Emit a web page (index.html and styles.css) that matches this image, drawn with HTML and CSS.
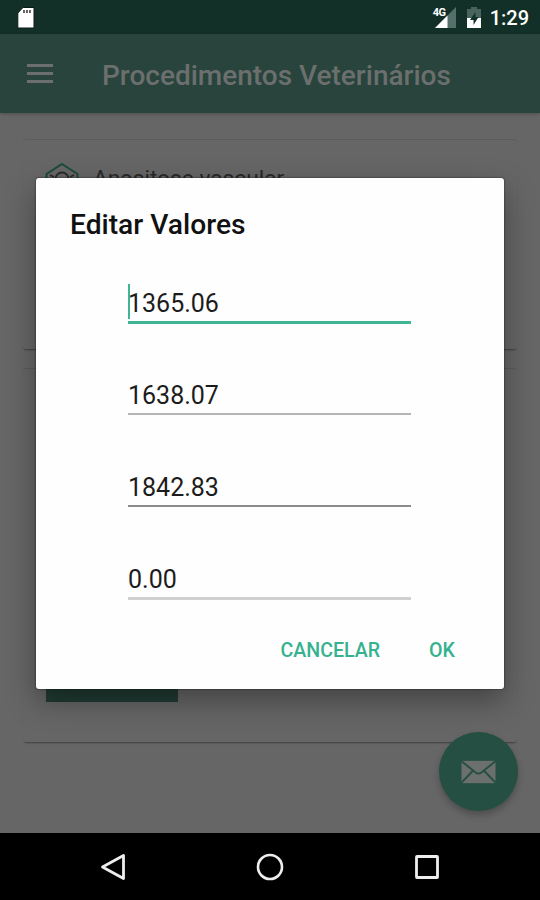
FILE: index.html
```html
<!DOCTYPE html>
<html lang="pt-BR">
<head>
    <meta charset="UTF-8">
    <meta name="viewport" content="width=device-width, initial-scale=1.0">
    <title>Procedimentos Veterinários</title>
    <link rel="stylesheet" href="styles.css">
</head>
<body>
    <div class="screen">
        <div class="status-bar">
            <svg class="sd-icon" width="18" height="22" viewBox="0 0 18 22">
                <path d="M6 0.500h11v20.500H0.800V6z" fill="#fff" stroke="#071a15" stroke-width="1"/>
                <path d="M7 3v3M10 3v3M13 3v3" stroke="#333" stroke-width="1.500"/>
            </svg>
            <div class="status-right">
                <span class="network">4G</span>
                <svg class="signal-icon" width="21" height="21" viewBox="0 0 21 21">
                    <path d="M21 0v21H0z" fill="#55706a"/>
                    <path d="M12.500 8.500V21H0z" fill="#fff"/>
                </svg>
                <svg class="battery-icon" width="14" height="21" viewBox="0 0 14 21">
                    <path d="M4 0h6v2h4v9H0V2h4z" fill="#48645c"/>
                    <path d="M0 11h14v10H0z" fill="#fff"/>
                    <path d="M8.500 5L3 13h3.500v5L11.500 10H8.500z" fill="#123028"/>
                </svg>
                <span class="clock">1:29</span>
            </div>
        </div>

        <header class="app-bar">
            <svg class="menu-icon" width="26" height="20" viewBox="0 0 26 20">
                <path d="M0 1.500h26M0 9.500h26M0 17.500h26" stroke="#6b6f6d" stroke-width="2.800"/>
            </svg>
            <h1>Procedimentos Veterinários</h1>
        </header>

        <main class="content">
            <div class="card card-first">
                <svg width="34" height="38" viewBox="0 0 34 38" fill="none">
                    <path d="M17 2L32.500 12v16L17 37 1.500 28V12z" stroke="#1b4a3b" stroke-width="2"/>
                    <circle cx="17" cy="17" r="6.500" stroke="#2b2b2b" stroke-width="1.800"/>
                    <path d="M5 13l4 2M29 13l-4 2" stroke="#2b2b2b" stroke-width="1.800"/>
                </svg>
                <span>Anasitose vascular</span>
            </div>
            <div class="card card-second">
                <div class="card-button"></div>
            </div>
        </main>

        <nav class="nav-bar">
            <svg width="26" height="28" viewBox="0 0 26 28" fill="none">
                <path d="M23.500 2.500v23L2.500 14z" stroke="#eee" stroke-width="2.800" stroke-linejoin="round"/>
            </svg>
            <svg width="28" height="28" viewBox="0 0 28 28" fill="none">
                <circle cx="14" cy="14" r="12" stroke="#eee" stroke-width="2.600"/>
            </svg>
            <svg width="26" height="26" viewBox="0 0 26 26" fill="none">
                <rect x="2.500" y="2.500" width="21" height="21" rx="0.500" stroke="#eee" stroke-width="2.800"/>
            </svg>
        </nav>

        <div class="fab">
            <svg width="35" height="24" viewBox="0 0 36 24">
                <rect x="0.500" y="0.500" width="35" height="23" fill="#6b6f6d"/>
                <path d="M0 0.500L15 12.500q3 2.200 6 0L36 0.500M0 23.500l12-12.500M36 23.500L24 11" fill="none" stroke="#254f43" stroke-width="2"/>
            </svg>
        </div>

        <!-- Dialog -->
        <div class="dialog">
            <h2>Editar Valores</h2>
            <div class="fields">
                <div class="field active">1365.06</div>
                <div class="field">1638.07</div>
                <div class="field darker">1842.83</div>
                <div class="field light">0.00</div>
            </div>
            <div class="actions">
                <button>CANCELAR</button>
                <button>OK</button>
            </div>
        </div>
    </div>
</body>
</html>
```
FILE: styles.css
```css
/* General Styles */
* {
    box-sizing: border-box;
}

body {
    margin: 0;
    font-family: Roboto, sans-serif;
    background: #666;
}

h1, h2 {
    margin: 0;
    font-weight: 500;
}

svg {
    display: block;
}

.screen {
    position: relative;
    display: flex;
    flex-direction: column;
    height: 900px;
    overflow: hidden;
}

/* Status Bar */
.status-bar {
    display: flex;
    justify-content: space-between;
    height: 34px;
    padding: 7px 11px 0 17px;
    background: #123028;
    color: #fff;
}

.status-right {
    display: flex;
}

.network {
    margin-right: -10px;
    font-size: 11px;
    font-weight: 700;
    line-height: 12px;
    letter-spacing: -0.5px;
    z-index: 1;
}

.signal-icon {
    margin-left: -1px;
}

.battery-icon {
    margin: 0 9px 0 11px;
}

.clock {
    font-size: 20px;
    font-weight: 500;
    line-height: 23px;
}

/* App Bar */
.app-bar {
    display: flex;
    align-items: center;
    height: 79px;
    padding-left: 27px;
    background: #28443c;
    color: #6b6f6d;
    box-shadow: 0 1px 3px rgba(0, 0, 0, 0.25);
    z-index: 1;
}

.app-bar h1 {
    margin: 4px 0 0 49px;
    font-size: 28px;
    line-height: 32px;
}

/* Content */
.content {
    flex: 1;
    padding: 26px 23px 0;
}

.card {
    border-top: 1px solid #5b5b5b;
    border-radius: 3px;
    background: #666;
    box-shadow: 0 2px 2px -1px rgba(0, 0, 0, 0.4);
}

.card-first {
    display: flex;
    gap: 14px;
    height: 210px;
    padding: 22px 22px 0;
    color: #292929;
    font-size: 22.7px;
    line-height: 34px;
}

.card-second {
    display: flex;
    align-items: flex-end;
    height: 374px;
    margin-top: 19px;
    padding: 0 23px 40px;
}

.card-button {
    width: 132px;
    height: 48px;
    background: #213b33;
}

/* Navigation Bar */
.nav-bar {
    display: flex;
    justify-content: space-between;
    align-items: center;
    height: 67px;
    padding: 0 100px;
    background: #000;
}

/* Floating Button */
.fab {
    position: absolute;
    left: 439px;
    top: 732px;
    display: flex;
    justify-content: center;
    align-items: center;
    width: 79px;
    height: 79px;
    border-radius: 50%;
    background: #254f43;
    box-shadow: 0 4px 7px rgba(0, 0, 0, 0.25);
}

/* Dialog */
.dialog {
    position: absolute;
    left: 36px;
    top: 178px;
    z-index: 2;
    width: 468px;
    height: 511px;
    padding: 30px 34px 0;
    border-radius: 3px;
    background: #fefefe;
    box-shadow: 0 0 2px rgba(0, 0, 0, 0.7), 0 12px 30px rgba(0, 0, 0, 0.35);
}

.dialog h2 {
    color: #111;
    font-size: 28.2px;
    line-height: 34px;
}

.fields {
    display: grid;
    grid-auto-rows: 40px;
    gap: 52px;
    margin: 42px 59px 0 58px;
}

.field {
    height: 39px;
    border-bottom: 2px solid #b5b5b5;
    color: #1c1c1c;
    font-size: 25px;
    line-height: 40px;
}

.field.darker {
    border-color: #8c8c8c;
}

.field.light {
    height: 40px;
    border-bottom: 3px solid #d0d0d0;
}

.field.active {
    position: relative;
    height: 40px;
    border-bottom: 3px solid #40b596;
}

/* Text cursor */
.field.active::before {
    content: "";
    position: absolute;
    left: 0;
    top: 0;
    width: 2px;
    height: 35px;
    background: #40b596;
}

.actions {
    display: flex;
    justify-content: flex-end;
    gap: 49px;
    margin: 38px 15px 0 0;
}

.actions button {
    padding: 0;
    border: none;
    background: none;
    color: #35b28f;
    font-family: inherit;
    font-size: 19.6px;
    font-weight: 500;
    line-height: 26px;
}
```
